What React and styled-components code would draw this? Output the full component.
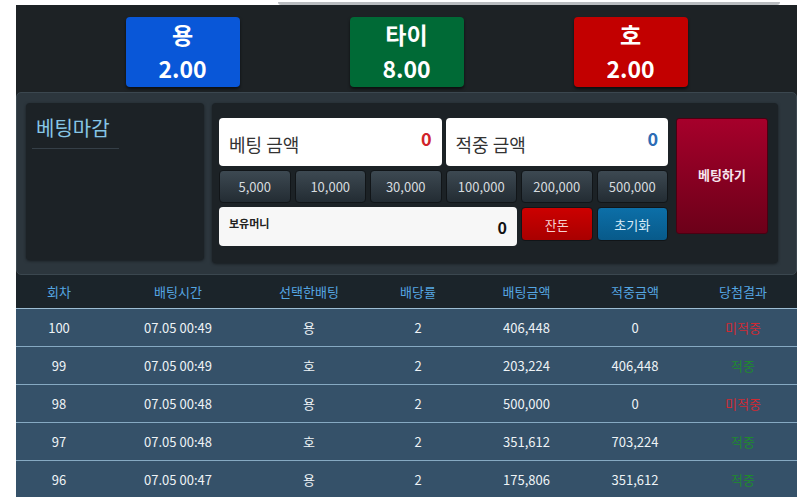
import styled, { createGlobalStyle } from "styled-components";

const GlobalStyle = createGlobalStyle`
  html, body {
    margin: 0;
    padding: 0;
    background: #ffffff;
    font-family: "Noto Sans CJK KR", "Noto Sans", sans-serif;
  }
  * { box-sizing: border-box; }
`;

const TopStrip = styled.div`
  height: 5px;
  display: flex;
  align-items: flex-end;
`;

const StripBar = styled.div`
  margin-left: 278px;
  width: 502px;
  height: 3px;
  background: #b9bcbf;
  border-radius: 0 0 6px 6px;
`;

const Page = styled.div`
  margin-left: 16px;
  width: 781px;
  background: #1d2225;
`;

const OddsBar = styled.div`
  display: flex;
  justify-content: center;
  gap: 110px;
  padding: 12px 0 5px;
`;

const OddsButton = styled.div`
  width: 114px;
  height: 70px;
  border-radius: 4px;
  background: ${(p) => p.$bg};
  box-shadow: 0 2px 3px rgba(0, 0, 0, 0.6);
  display: flex;
  flex-direction: column;
  align-items: center;
  justify-content: center;
  color: #fff;
  font-weight: 700;
  font-size: 23px;
  line-height: 34px;
  padding-bottom: 2px;
`;

const BetPanel = styled.div`
  background: #2c363d;
  border: 1px solid #3b474f;
  border-radius: 5px;
  display: flex;
  gap: 8px;
  padding: 10px 18px 11px 9px;
`;

const StatusBox = styled.div`
  width: 178px;
  height: 157px;
  background: #1c2226;
  border-radius: 4px;
  box-shadow: 0 1px 3px rgba(0, 0, 0, 0.5);
  padding: 10px 6px 0;
`;

const StatusTitle = styled.div`
  color: #86c6e6;
  font-size: 20px;
  line-height: 26px;
  padding: 2px 4px 7px;
  width: 87px;
  border-bottom: 1px solid #353f47;
`;

const Controls = styled.div`
  flex: 1;
  height: 160px;
  background: #1c2226;
  border-radius: 4px;
  box-shadow: 0 1px 3px rgba(0, 0, 0, 0.5);
  display: flex;
  gap: 8px;
  padding: 15px 10px 0 7px;
`;

const Grid = styled.div`
  width: 449px;
  display: grid;
  grid-template-columns: repeat(6, 1fr);
  grid-template-rows: 48px 33px 39px;
  column-gap: 4px;
  row-gap: 4px;
`;

const AmountBox = styled.div`
  grid-column: span ${(p) => p.$span};
  background: ${(p) => p.$bg || "#ffffff"};
  border-radius: 4px;
  display: flex;
  justify-content: space-between;
  align-items: center;
  padding: 0 10px;
`;

const AmountLabel = styled.span`
  color: #333;
  font-size: 18px;
  padding-top: 4px;
`;

const AmountValue = styled.span`
  color: ${(p) => p.$color};
  font-size: 18px;
  font-weight: 700;
  margin-bottom: 8px;
`;

const MoneyLabel = styled.span`
  color: #222;
  font-size: 11px;
  font-weight: 700;
  margin-bottom: 8px;
`;

const MoneyValue = styled.span`
  color: #111;
  font-size: 16px;
  font-weight: 700;
`;

const Chip = styled.button`
  font-family: inherit;
  font-size: 13px;
  color: ${(p) => p.$color || "#d6dbdf"};
  border: 1px solid #111518;
  border-radius: 4px;
  background: ${(p) => p.$bg || "linear-gradient(#3d4952, #232c33)"};
  padding: 0;
  cursor: pointer;
  height: ${(p) => p.$h || "33px"};
`;

const BetButton = styled.button`
  width: 92px;
  height: 116px;
  font-family: inherit;
  font-size: 13px;
  font-weight: 700;
  color: #f7e6ee;
  border: 1px solid #4a0012;
  border-radius: 3px;
  background: linear-gradient(#a6002b, #6c0019);
  cursor: pointer;
  padding: 0 0 4px;
`;

const Table = styled.div`
  display: grid;
  grid-template-columns: 86px 152px 110px 108px 109px 108px 108px;
`;

const HeadCell = styled.div`
  height: 34px;
  background: #1b242a;
  color: #55a6e2;
  font-size: 13px;
  display: flex;
  align-items: center;
  justify-content: center;
  border-bottom: 1px solid #9dbdd3;
`;

const Cell = styled.div`
  height: 38px;
  background: #355169;
  color: ${(p) => p.$color || "#eef3f6"};
  font-size: 13px;
  display: flex;
  align-items: center;
  justify-content: center;
  border-bottom: 1px solid #86a9c2;
`;

const odds = [
  { name: "용", value: "2.00", bg: "#0957d8" },
  { name: "타이", value: "8.00", bg: "#006a36" },
  { name: "호", value: "2.00", bg: "#c20000" },
];

const chips = ["5,000", "10,000", "30,000", "100,000", "200,000", "500,000"];

const headers = ["회차", "배팅시간", "선택한배팅", "배당률", "배팅금액", "적중금액", "당첨결과"];

const rows = [
  ["100", "07.05 00:49", "용", "2", "406,448", "0", "미적중"],
  ["99", "07.05 00:49", "호", "2", "203,224", "406,448", "적중"],
  ["98", "07.05 00:48", "용", "2", "500,000", "0", "미적중"],
  ["97", "07.05 00:48", "호", "2", "351,612", "703,224", "적중"],
  ["96", "07.05 00:47", "용", "2", "175,806", "351,612", "적중"],
];

export default function App() {
  return (
    <>
      <GlobalStyle />
      <TopStrip>
        <StripBar />
      </TopStrip>
      <Page>
        <OddsBar>
          {odds.map((o) => (
            <OddsButton key={o.name} $bg={o.bg}>
              <span>{o.name}</span>
              <span>{o.value}</span>
            </OddsButton>
          ))}
        </OddsBar>

        <BetPanel>
          <StatusBox>
            <StatusTitle>베팅마감</StatusTitle>
          </StatusBox>
          <Controls>
            <Grid>
              <AmountBox $span={3}>
                <AmountLabel>베팅 금액</AmountLabel>
                <AmountValue $color="#d0232a">0</AmountValue>
              </AmountBox>
              <AmountBox $span={3}>
                <AmountLabel>적중 금액</AmountLabel>
                <AmountValue $color="#2d6cb5">0</AmountValue>
              </AmountBox>
              {chips.map((c) => (
                <Chip key={c}>{c}</Chip>
              ))}
              <AmountBox $span={4} $bg="#f7f7f7">
                <MoneyLabel>보유머니</MoneyLabel>
                <MoneyValue>0</MoneyValue>
              </AmountBox>
              <Chip $h="34px" $bg="linear-gradient(#cc0000, #a80000)" $color="#f6d2d2">
                잔돈
              </Chip>
              <Chip $h="34px" $bg="linear-gradient(#0c6fa8, #085a8a)" $color="#d8ecf8">
                초기화
              </Chip>
            </Grid>
            <BetButton>베팅하기</BetButton>
          </Controls>
        </BetPanel>

        <Table>
          {headers.map((h) => (
            <HeadCell key={h}>{h}</HeadCell>
          ))}
          {rows.map((r) =>
            r.map((v, i) => (
              <Cell
                key={r[0] + "-" + i}
                $color={i === 6 ? (v === "적중" ? "#1f8a2e" : "#cf2a33") : undefined}
              >
                {v}
              </Cell>
            ))
          )}
        </Table>
      </Page>
    </>
  );
}
